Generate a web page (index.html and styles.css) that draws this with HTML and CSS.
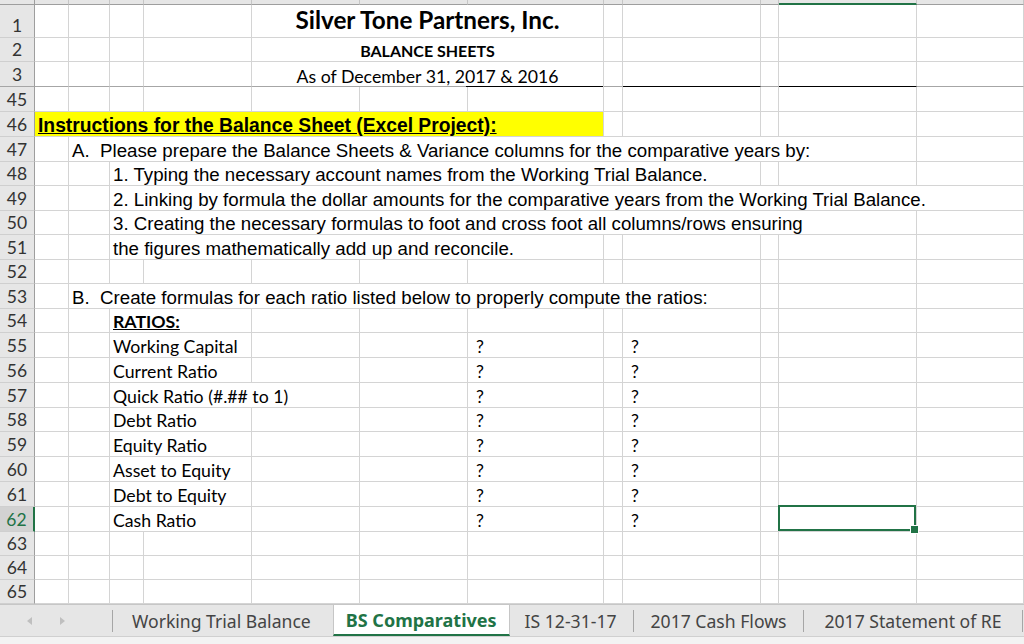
FILE: index.html
```html
<!DOCTYPE html>
<html>
<head>
<meta charset="utf-8">
<link rel="stylesheet" href="styles.css">
</head>
<body>
<div class="app">
  <div class="colhead">
    <div class="corner"></div><div></div><div></div><div></div><div></div><div></div><div></div><div></div><div></div><div></div><div></div><div class="csel"></div><div></div>
  </div>

  <div class="row h33"><div class="rh">1</div><div></div><div></div><div></div><div></div><div class="sp3 center title"><span>Silver Tone Partners, Inc.</span></div><div></div><div></div><div></div><div></div><div></div></div>
  <div class="row h24"><div class="rh">2</div><div></div><div></div><div></div><div></div><div class="sp3 center sub"><span>BALANCE SHEETS</span></div><div></div><div></div><div></div><div></div><div></div></div>
  <div class="row h25 hid"><div class="rh">3</div><div></div><div></div><div></div><div></div><div class="sp3 center cal gline"><span>As of December 31, 2017 &amp; 2016</span></div><div></div><div class="blk"></div><div></div><div class="blk"></div><div></div></div>
  <div class="row h25"><div class="rh">45</div><div></div><div></div><div></div><div></div><div></div><div></div><div></div><div></div><div></div><div></div><div></div><div></div></div>
  <div class="row h25"><div class="rh">46</div><div class="sp7 yellow ar hb u"><span>Instructions for the Balance Sheet (Excel Project):</span></div><div></div><div></div><div></div><div></div><div></div></div>
  <div class="row h25"><div class="rh">47</div><div></div><div class="sp10 ar"><span>A.&nbsp;&nbsp;Please prepare the Balance Sheets &amp; Variance columns for the comparative years by:</span></div><div></div></div>
  <div class="row h24"><div class="rh">48</div><div></div><div></div><div class="sp7 ar"><span>1. Typing the necessary account names from the Working Trial Balance.</span></div><div></div><div></div><div></div></div>
  <div class="row h25"><div class="rh">49</div><div></div><div></div><div class="sp10 ar"><span>2. Linking by formula the dollar amounts for the comparative years from the Working Trial Balance.</span></div></div>
  <div class="row h24"><div class="rh">50</div><div></div><div></div><div class="sp9 ar"><span>3. Creating the necessary formulas to foot and cross foot all columns/rows ensuring</span></div><div></div></div>
  <div class="row h25"><div class="rh">51</div><div></div><div></div><div class="sp5 ar"><span>the figures mathematically add up and reconcile.</span></div><div></div><div></div><div></div><div></div><div></div></div>
  <div class="row h24"><div class="rh">52</div><div></div><div></div><div></div><div></div><div></div><div></div><div></div><div></div><div></div><div></div><div></div><div></div></div>
  <div class="row h25"><div class="rh">53</div><div></div><div class="sp8 ar"><span>B.&nbsp;&nbsp;Create formulas for each ratio listed below to properly compute the ratios:</span></div><div></div><div></div><div></div></div>
  <div class="row h24"><div class="rh">54</div><div></div><div></div><div class="sp2 cal b u"><span>RATIOS:</span></div><div></div><div></div><div></div><div></div><div></div><div></div><div></div><div></div></div>
  <div class="row h25"><div class="rh">55</div><div></div><div></div><div class="sp2 cal"><span>Working Capital</span></div><div></div><div></div><div class="cal q"><span>?</span></div><div></div><div class="cal q"><span>?</span></div><div></div><div></div><div></div></div>
  <div class="row h25"><div class="rh">56</div><div></div><div></div><div class="sp2 cal"><span>Current Ratio</span></div><div></div><div></div><div class="cal q"><span>?</span></div><div></div><div class="cal q"><span>?</span></div><div></div><div></div><div></div></div>
  <div class="row h25"><div class="rh">57</div><div></div><div></div><div class="sp3 cal"><span>Quick Ratio (#.## to 1)</span></div><div></div><div class="cal q"><span>?</span></div><div></div><div class="cal q"><span>?</span></div><div></div><div></div><div></div></div>
  <div class="row h24"><div class="rh">58</div><div></div><div></div><div class="sp2 cal"><span>Debt Ratio</span></div><div></div><div></div><div class="cal q"><span>?</span></div><div></div><div class="cal q"><span>?</span></div><div></div><div></div><div></div></div>
  <div class="row h25"><div class="rh">59</div><div></div><div></div><div class="sp2 cal"><span>Equity Ratio</span></div><div></div><div></div><div class="cal q"><span>?</span></div><div></div><div class="cal q"><span>?</span></div><div></div><div></div><div></div></div>
  <div class="row h25"><div class="rh">60</div><div></div><div></div><div class="sp2 cal"><span>Asset to Equity</span></div><div></div><div></div><div class="cal q"><span>?</span></div><div></div><div class="cal q"><span>?</span></div><div></div><div></div><div></div></div>
  <div class="row h25"><div class="rh">61</div><div></div><div></div><div class="sp2 cal"><span>Debt to Equity</span></div><div></div><div></div><div class="cal q"><span>?</span></div><div></div><div class="cal q"><span>?</span></div><div></div><div></div><div></div></div>
  <div class="row h25"><div class="rh on">62</div><div></div><div></div><div class="sp2 cal"><span>Cash Ratio</span></div><div></div><div></div><div class="cal q"><span>?</span></div><div></div><div class="cal q"><span>?</span></div><div></div><div class="sel"></div><div></div></div>
  <div class="row h24"><div class="rh">63</div><div></div><div></div><div></div><div></div><div></div><div></div><div></div><div></div><div></div><div></div><div></div><div></div></div>
  <div class="row h24"><div class="rh">64</div><div></div><div></div><div></div><div></div><div></div><div></div><div></div><div></div><div></div><div></div><div></div><div></div></div>
  <div class="row h24"><div class="rh">65</div><div></div><div></div><div></div><div></div><div></div><div></div><div></div><div></div><div></div><div></div><div></div><div></div></div>

  <div class="tabbar">
    <div class="tabs">
      <div class="nav">
        <svg width="8" height="10" viewBox="0 0 8 10"><polygon points="6,1 1,5 6,9" fill="#bfbfbf"/></svg>
        <svg width="8" height="10" viewBox="0 0 8 10"><polygon points="2,1 7,5 2,9" fill="#bfbfbf"/></svg>
      </div>
      <div class="sep"></div>
      <div class="tab t1">Working Trial Balance</div>
      <div class="tab active">BS Comparatives</div>
      <div class="tab t3">IS 12-31-17</div>
      <div class="sep"></div>
      <div class="tab t4">2017 Cash Flows</div>
      <div class="sep"></div>
      <div class="tab t5">2017 Statement of RE</div>
      <div class="sep"></div>
    </div>
  </div>
</div>
</body>
</html>
```

FILE: styles.css
```css
* { box-sizing: border-box; }
html, body { margin: 0; padding: 0; }
body { width: 1024px; height: 644px; overflow: hidden; background: #fff; font-family: "Liberation Sans", Arial, sans-serif; color: #000; }
.app { width: 1024px; height: 644px; display: flex; flex-direction: column; }

.colhead, .row {
  display: grid;
  grid-template-columns: 35px 34px 41px 34px 108px 108px 108px 136px 19px 138px 18px 138px 1fr;
}
.colhead { height: 5px; }
.colhead > div { background: #e6e6e6; border-right: 1px solid #c6c6c6; border-bottom: 1px solid #9e9e9e; }
.colhead > .corner { border-right-color: #9e9e9e; }
.colhead > .csel { border-bottom: 2px solid #217346; }

.h33 { height: 33px; }
.h25 { height: 25px; }
.h24 { height: 24px; }

.row > div {
  border-right: 1px solid #d4d4d4;
  border-bottom: 1px solid #d4d4d4;
  display: flex;
  align-items: flex-end;
  white-space: nowrap;
  padding: 0 3px;
  min-width: 0;
}
.row > .rh {
  background: #e6e6e6;
  border-right-color: #9e9e9e;
  border-bottom-color: #cfcfcf;
  justify-content: center;
  font-family: Lato, "Open Sans", sans-serif;
  font-size: 17.5px;
  line-height: 20px;
  color: #333;
  padding: 0 0 1px 0;
}
.row > .rh.on { background: #d2d2d2; color: #217346; border-right: 2px solid #217346; }

.hid > div { border-bottom-color: #a6a6a6; }
.hid > .rh { border-bottom-color: #a6a6a6; }
.hid > .blk { border-bottom-color: #000; }
.hid > .gline {
  border-bottom: none;
  background: linear-gradient(to right, #a6a6a6 calc(100% - 137px), #000 0) left bottom / 100% 1px no-repeat;
}

.sp2 { grid-column: span 2; }
.sp3 { grid-column: span 3; }
.sp5 { grid-column: span 5; }
.sp7 { grid-column: span 7; }
.sp8 { grid-column: span 8; }
.sp9 { grid-column: span 9; }
.sp10 { grid-column: span 10; }

.center { justify-content: center; }
.row > .title { font-family: Lato, sans-serif; font-weight: 700; font-size: 24.3px; line-height: 28px; padding-bottom: 3px; }
.sub { font-family: Lato, sans-serif; font-weight: 700; font-size: 16px; line-height: 20px; }
.cal { font-family: Lato, sans-serif; font-size: 17.7px; line-height: 20px; }
.ar { font-family: "Liberation Sans", Arial, sans-serif; font-size: 18.7px; line-height: 21px; }
.b { font-weight: 700; }
.hb { font-weight: 700; font-size: 19.3px; }
.u span { text-decoration: underline; }
.row > .q { padding-left: 8px; }
.row > .yellow { background: #ffff00; }

.row > .sel { position: relative; }
.sel::after {
  content: "";
  position: absolute;
  left: -1px; top: -2px; right: 0; bottom: 0;
  border: 2px solid #217346;
}
.sel::before {
  content: "";
  position: absolute;
  right: -3px; bottom: -3px;
  width: 7px; height: 7px;
  background: #217346;
  border: 1px solid #fff;
  z-index: 2;
}

.tabbar { height: 40px; background: #f3f3f3; border-top: 1px solid #c6c6c6; }
.tabs { height: 32px; background: #e6e6e6; border-bottom: 1px solid #d0d0d0; display: flex; align-items: stretch; }
.nav { width: 112px; display: flex; align-items: center; gap: 24px; padding-left: 26px; }
.sep { width: 1px; background: #a6a6a6; margin: 5px 0 4px; }
.tab {
  display: flex; align-items: center;
  padding: 0 21px;
  font-family: "Noto Sans", "Open Sans", sans-serif;
  font-size: 17.6px;
  color: #444;
}
.tab.t1 { padding: 0 22px 0 19px; }
.tab.active {
  background: #fff;
  color: #217346;
  font-weight: 700;
  font-size: 18px;
  border-left: 1px solid #c6c6c6;
  border-right: 1px solid #c6c6c6;
  border-bottom: 2px solid #217346;
  padding: 0 12px;
}
.tab.t3 { padding: 0 16px 0 15px; }
.tab.t4 { padding: 0 17px; }
.tab.t5 { padding: 0 20px; }
```
